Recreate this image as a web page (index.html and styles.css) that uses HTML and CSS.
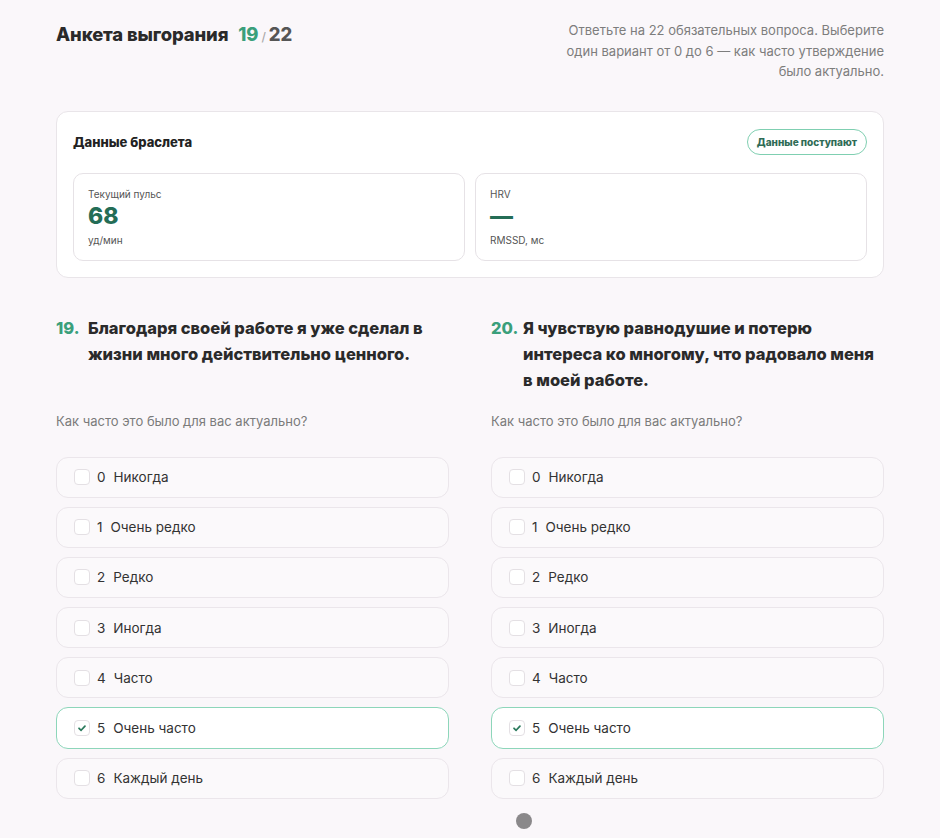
FILE: index.html
```html
<!DOCTYPE html>
<html lang="ru">
<head>
<meta charset="utf-8">
<link rel="stylesheet" href="styles.css">
</head>
<body>
<div class="page">
  <header class="header">
    <h1 class="title">Анкета выгорания <span class="count"><span class="cur">19</span><span class="sep">/</span><span class="tot">22</span></span></h1>
    <p class="desc">Ответьте на 22 обязательных вопроса. Выберите один вариант от 0 до 6 — как часто утверждение было актуально.</p>
  </header>

  <section class="card">
    <div class="card-head">
      <h2 class="card-title">Данные браслета</h2>
      <span class="badge">Данные поступают</span>
    </div>
    <div class="metrics">
      <div class="metric">
        <div class="m-label">Текущий пульс</div>
        <div class="m-value">68</div>
        <div class="m-unit">уд/мин</div>
      </div>
      <div class="metric">
        <div class="m-label">HRV</div>
        <div class="m-value">—</div>
        <div class="m-unit">RMSSD, мс</div>
      </div>
    </div>
  </section>

  <section class="questions">
    <div class="question">
      <h3 class="q-title"><span class="q-num">19.</span><span class="q-text">Благодаря своей работе я уже сделал в жизни много действительно ценного.</span></h3>
      <p class="q-hint">Как часто это было для вас актуально?</p>
      <ul class="options">
        <li class="option"><span class="box"></span><span class="o-num">0</span><span>Никогда</span></li>
        <li class="option"><span class="box"></span><span class="o-num">1</span><span>Очень редко</span></li>
        <li class="option"><span class="box"></span><span class="o-num">2</span><span>Редко</span></li>
        <li class="option"><span class="box"></span><span class="o-num">3</span><span>Иногда</span></li>
        <li class="option"><span class="box"></span><span class="o-num">4</span><span>Часто</span></li>
        <li class="option selected"><span class="box"><svg viewBox="0 0 16 16" width="16" height="16"><path d="M4.6 8.3 L7 10.6 L11.4 5.8" fill="none" stroke="#2b7a5d" stroke-width="2" stroke-linecap="round" stroke-linejoin="round"/></svg></span><span class="o-num">5</span><span>Очень часто</span></li>
        <li class="option"><span class="box"></span><span class="o-num">6</span><span>Каждый день</span></li>
      </ul>
    </div>
    <div class="question">
      <h3 class="q-title"><span class="q-num">20.</span><span class="q-text">Я чувствую равнодушие и потерю интереса ко многому, что радовало меня в моей работе.</span></h3>
      <p class="q-hint">Как часто это было для вас актуально?</p>
      <ul class="options">
        <li class="option"><span class="box"></span><span class="o-num">0</span><span>Никогда</span></li>
        <li class="option"><span class="box"></span><span class="o-num">1</span><span>Очень редко</span></li>
        <li class="option"><span class="box"></span><span class="o-num">2</span><span>Редко</span></li>
        <li class="option"><span class="box"></span><span class="o-num">3</span><span>Иногда</span></li>
        <li class="option"><span class="box"></span><span class="o-num">4</span><span>Часто</span></li>
        <li class="option selected"><span class="box"><svg viewBox="0 0 16 16" width="16" height="16"><path d="M4.6 8.3 L7 10.6 L11.4 5.8" fill="none" stroke="#2b7a5d" stroke-width="2" stroke-linecap="round" stroke-linejoin="round"/></svg></span><span class="o-num">5</span><span>Очень часто</span></li>
        <li class="option"><span class="box"></span><span class="o-num">6</span><span>Каждый день</span></li>
      </ul>
    </div>
  </section>
  <div class="cursor-dot"></div>
</div>
</body>
</html>
```

FILE: styles.css
```css
* { box-sizing: border-box; }
html, body { margin: 0; padding: 0; }
body {
  background: #faf7fa;
  font-family: Inter, "Noto Sans", "Liberation Sans", sans-serif;
  color: #2b2b2b;
}
.page {
  position: relative;
  padding: 20px 56px 0 56px;
  min-height: 838px;
}
.header {
  display: flex;
  justify-content: space-between;
  align-items: flex-start;
}
.title {
  margin: 2px 0 0 0;
  font-size: 18.4px;
  line-height: 24px;
  font-weight: 800;
  color: #2a2a2a;
  letter-spacing: -0.1px;
}
.count { margin-left: 6px; }
.cur { color: #3a9f7b; }
.sep { color: #a9a9a9; font-size: 12px; font-weight: 500; margin: 0 3px; }
.tot { color: #555; }
.desc {
  margin: 0;
  width: 330px;
  text-align: right;
  font-size: 13px;
  line-height: 20.5px;
  color: #7d7d7d;
}
.card {
  margin-top: 29px;
  background: #fff;
  border: 1px solid #e9e5e9;
  border-radius: 12px;
  padding: 17px 16px 16px 16px;
}
.card-head {
  display: flex;
  justify-content: space-between;
  align-items: center;
  height: 26px;
}
.card-title {
  margin: 0;
  font-size: 13px;
  font-weight: 800;
  color: #222;
}
.badge {
  display: inline-flex;
  align-items: center;
  height: 26px;
  padding: 0 9px;
  border: 1px solid #7fcfb1;
  border-radius: 13px;
  font-size: 10px;
  font-weight: 800;
  color: #2f6b56;
}
.metrics {
  margin-top: 18px;
  display: grid;
  grid-template-columns: 1fr 1fr;
  gap: 10px;
}
.metric {
  border: 1px solid #e6e2e6;
  border-radius: 10px;
  padding: 13px 14px 13px 14px;
  height: 88px;
}
.m-label, .m-unit {
  font-size: 10px;
  line-height: 14px;
  color: #555;
}
.m-value {
  margin-top: 3px;
  font-size: 23px;
  line-height: 24px;
  font-weight: 800;
  color: #246d56;
}
.m-unit { margin-top: 5px; }
.questions {
  margin-top: 37px;
  display: grid;
  grid-template-columns: 1fr 1fr;
  gap: 42px;
}
.q-title {
  margin: 0;
  display: flex;
  min-height: 78px;
  font-size: 16.5px;
  line-height: 26px;
  font-weight: 800;
  color: #2a2a2a;
}
.q-num {
  flex: 0 0 32px;
  color: #3a9f7b;
}
.q-text { flex: 1; padding-right: 4px; }
.q-hint {
  margin: 19px 0 0 0;
  font-size: 13px;
  line-height: 18px;
  color: #7b7b7b;
}
.options {
  list-style: none;
  margin: 27px 0 0 0;
  padding: 0;
  display: flex;
  flex-direction: column;
  gap: 9px;
}
.option {
  display: flex;
  align-items: center;
  height: 41.2px;
  padding-left: 17px;
  border: 1px solid #ebe6eb;
  border-radius: 12px;
  background: #fbf9fb;
  font-size: 13.5px;
  color: #333;
}
.option.selected {
  background: #fff;
  border-color: #8dd6ba;
}
.box {
  width: 16px;
  height: 16px;
  border: 1px solid #e4e0e4;
  border-radius: 4px;
  background: #fff;
  margin-right: 7px;
  display: inline-flex;
  align-items: center;
  justify-content: center;
}
.box svg { display: block; }
.o-num { margin-right: 8px; }
.cursor-dot {
  position: absolute;
  left: 516px;
  top: 813px;
  width: 16px;
  height: 16px;
  border-radius: 50%;
  background: #8a888a;
}
```
